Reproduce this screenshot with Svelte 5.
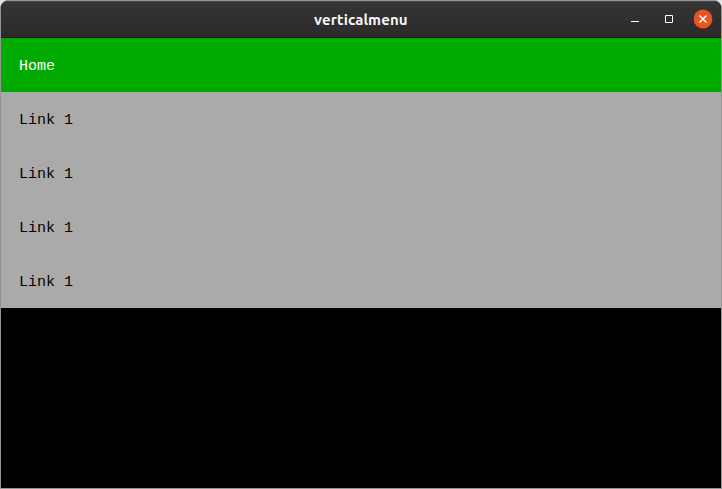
<script>
  const items = ['Home', 'Link 1', 'Link 1', 'Link 1', 'Link 1'];
  let active = $state(0);
</script>

<div class="window">
  <header class="titlebar">
    <h1>verticalmenu</h1>
    <div class="controls">
      <button aria-label="Minimize">
        <svg width="20" height="20" viewBox="0 0 20 20"><path d="M6 12h8v1H6z" fill="#fff" /></svg>
      </button>
      <button aria-label="Maximize">
        <svg width="20" height="20" viewBox="0 0 20 20"><path d="M6.5 6.5h7v7h-7z" fill="none" stroke="#fff" /></svg>
      </button>
      <button aria-label="Close">
        <svg width="20" height="20" viewBox="0 0 20 20">
          <circle cx="10" cy="10" r="9.4" fill="#e95420" />
          <path d="M6.5 6.5l7 7m0-7l-7 7" fill="none" stroke="#fff" stroke-width="1.5" />
        </svg>
      </button>
    </div>
  </header>
  <nav>
    {#each items as item, i}
      <button class="item" class:active={active === i} onclick={() => (active = i)}>{item}</button>
    {/each}
  </nav>
</div>

<style>
  :global(body) {
    background: #e4e4e4;
    overflow: hidden;
  }

  .window {
    box-sizing: border-box;
    width: 722px;
    height: 489px;
    border: 1px solid #949494;
    border-radius: 8px 8px 0 0;
    background: #000;
    overflow: hidden;
  }

  .titlebar {
    box-sizing: border-box;
    display: grid;
    grid-template-columns: 1fr auto 1fr;
    align-items: start;
    height: 37px;
    padding: 7px 8px 0 0;
    border-top: 1px solid #484846;
    border-bottom: 1px solid #1c1b1b;
    background: linear-gradient(#353432, #2c2a2b);
  }

  h1 {
    grid-column: 2;
    width: 94px;
    margin: 0 0 0 8px;
    color: #f7f7f7;
    font: 700 15px/21px Ubuntu, 'Noto Sans', sans-serif;
    letter-spacing: 0.13px;
    white-space: nowrap;
  }

  .controls {
    display: flex;
    justify-content: flex-end;
    gap: 14px;
  }

  button {
    padding: 0;
    border: 0;
    background: none;
  }

  svg {
    display: block;
  }

  nav {
    display: flex;
    flex-direction: column;
  }

  .item {
    height: 54px;
    padding: 3px 18px 0;
    background: #aaa;
    color: #000;
    font: 15px/18px 'Liberation Mono', monospace;
    text-align: left;
    white-space: pre;
  }

  .active {
    background: #0a0;
    color: #fff;
  }
</style>
